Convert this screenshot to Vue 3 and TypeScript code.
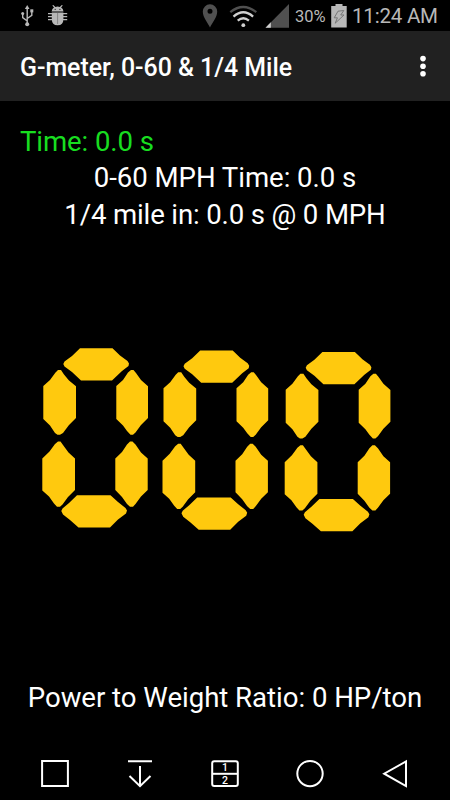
<script setup lang="ts">
interface Digit { id: number; x: number; y: number }

const digits: Digit[] = [
  { id: 1, x: 0, y: 0 },
  { id: 2, x: 120.2, y: 2.2 },
  { id: 3, x: 242.4, y: 3.7 },
]

// Six lit segments of a seven-segment zero
const segments: string[] = [
  'M50 13.3H82.5L90 20.5L97.5 26L99 28.5L98.5 31L92 36L82 45.5H51L42 37L34.5 31.5L33.3 29L34.5 26.5L42 21Z',
  'M28 35H31L34 39.5L39 45.5L46 51.3V83L39 90L33 98L30 99.7H27.5L25 98L20 90.5L13.3 84V51L20 45L25.5 37.5Z',
  'M101 35H103.5L106 38L111 45L118 51.3V83L111 90L105.5 97.5L103 99.7H100.5L97 96L93 90.5L86.3 84V51L93 45L98 37.5Z',
  'M28 106.5H30.5L33 110L38.5 117.5L45 123.5V155L38 162L32.5 169.5L30 171.8H27L24 168.5L19 161.5L12.3 155.5V123.5L19.5 116.5L25 109Z',
  'M100 106.5H102.5L105.5 109.5L111 117.5L117.7 123.5V155L111 161.5L105.5 169L103 171.8H100L97 169L92 162L85.3 155V123.5L92 117L97 109.5Z',
  'M47 160.2H80.5L88 167L95.5 173L97 175.5L96 178.5L88 184.5L80 192.6H48.5L40 185L33 179.5L31.3 176L32.5 173.5L39 168Z',
]
</script>

<template>
  <div class="screen">
    <header class="status">
      <svg class="notices" width="70" height="31" viewBox="0 0 70 31">
        <g fill="none" stroke="#b8b8b8" stroke-width="1.4">
          <path d="M27.2 8V24M27.2 21L22.7 17.6V13.5M27.2 18.5L31.8 15.3V11.5" />
        </g>
        <g fill="#b8b8b8">
          <path d="M27.2 5L29.5 9H24.9Z" />
          <circle cx="27.2" cy="24.2" r="2" />
          <circle cx="22.7" cy="13.5" r="1.5" />
          <path d="M30.3 9.3H33.3V12.4H30.3Z" />
          <path d="M51.6 11.6Q52 8.4 54 7.4L52.3 5.6L53.3 4.9L55.4 7Q57.5 6.2 59.8 7L61.8 4.9L62.8 5.6L61.1 7.4Q63.2 8.4 63.5 11.6Z" />
          <path d="M51.8 12.5H63.4V19Q63.4 25.3 57.6 25.3Q51.8 25.3 51.8 19Z" />
        </g>
        <path d="M48 13.7H52M48 16.7H52M48 19.6H52M63 13.7H67.2M63 16.7H67.2M63 19.6H67.2" stroke="#b8b8b8" stroke-width="1.3" />
        <path d="M57.6 13V24" stroke="#777" stroke-width=".8" />
        <path d="M54.6 9.4H55.8M59.3 9.4H60.5" stroke="#222" />
      </svg>
      <svg class="signals" width="92" height="31" viewBox="200 0 92 31">
        <path d="M210 27.5C208 23 202.8 17.5 202.8 11.5A7.2 7.2 0 0 1 217.2 11.5C217.2 17.5 212 23 210 27.5ZM210 8.8A2.5 2.5 0 1 0 210 13.8A2.5 2.5 0 1 0 210 8.8Z" fill="#505050" />
        <g fill="none" stroke-width="2.3">
          <path d="M230.3 12.2Q243.3 1.8 256.3 12.2" stroke="#505050" />
          <path d="M233.5 16.6Q243.3 8 253.1 16.6M237.7 20.6Q243.3 15.9 248.9 20.6" stroke="#d0d0d0" />
        </g>
        <circle cx="243.3" cy="25.2" r="1.9" fill="#d0d0d0" />
        <path d="M289 4V27.7H265.5Z" fill="#505050" />
        <path d="M270.8 22.3V27.7H265.5Z" fill="#d0d0d0" />
      </svg>
      <span class="percent">30%</span>
      <svg class="battery" width="16" height="24" viewBox="0 0 16 24">
        <path d="M4.5 0H11.5V2H15.7V23.5H.2V2H4.5Z" fill="#b8b8b8" />
        <path d="M7 7.2L12.8 6.5L9.7 11H13L4.2 19.2L6.4 13.8H3.2Z" fill="none" stroke="#777" />
      </svg>
      <span class="clock">11:24 AM</span>
    </header>

    <div class="toolbar">
      <h1>G-meter, 0-60 &amp; 1/4 Mile</h1>
      <svg width="10" height="26" viewBox="0 0 10 26" fill="#fff">
        <circle cx="5" cy="5.6" r="2.8" /><circle cx="5" cy="13.2" r="2.8" /><circle cx="5" cy="20.8" r="2.8" />
      </svg>
    </div>

    <main>
      <p class="timer">Time: 0.0 s</p>
      <p class="sprint">0-60 MPH Time: 0.0 s</p>
      <p class="quarter">1/4 mile in: 0.0 s @ 0 MPH</p>
      <svg class="speed" width="450" height="205" viewBox="0 0 450 205">
        <g fill="#ffc90e">
          <g v-for="digit in digits" :key="digit.id" :transform="`translate(${digit.x + 30} ${digit.y})`">
            <path v-for="segment in segments" :key="segment" :d="segment" />
          </g>
        </g>
      </svg>
      <p class="ratio">Power to Weight Ratio: 0 HP/ton</p>
    </main>

    <nav>
      <svg viewBox="0 0 30 30"><path d="M2.1 2.1H27.9V26.9H2.1Z" /></svg>
      <svg viewBox="0 0 30 30"><path d="M3 2.3H27M15 7V27M4.5 17L15 27.2L25.5 17" /></svg>
      <svg viewBox="0 0 30 30">
        <rect x="2.2" y="2.2" width="25.6" height="24.8" rx="2" /><path d="M2 14.8H28" />
        <text x="15" y="12.1">1</text><text x="15" y="24.8">2</text>
      </svg>
      <svg viewBox="0 0 30 30"><circle cx="15" cy="14.6" r="12.7" /></svg>
      <svg viewBox="0 0 30 30"><path d="M26 2.5V27L4.2 14.7Z" /></svg>
    </nav>
  </div>
</template>

<style>
body { margin: 0; background: #000; }
</style>

<style scoped>
.screen { width: 450px; height: 800px; display: flex; flex-direction: column; background: #000; color: #fff; font-family: Roboto, sans-serif; overflow: hidden; }
.status { height: 31px; flex: none; display: flex; align-items: flex-start; color: #b8b8b8; white-space: nowrap; }
.signals { margin-left: 130px; }
.percent { width: 36px; margin-left: 3px; line-height: 33px; font-size: 16.5px; }
.battery { margin-top: 3.5px; }
.clock { margin-left: 5px; line-height: 33px; font-size: 20.6px; letter-spacing: -.25px; }
.toolbar { height: 70px; flex: none; box-sizing: border-box; padding: 0 22.5px 0 20px; display: flex; align-items: center; justify-content: space-between; background: #212121; }
h1 { margin: 4px 0 0; font-size: 24.9px; line-height: 30px; font-weight: 500; white-space: nowrap; }
main { flex: 1; display: flex; flex-direction: column; padding-top: 22px; }
p { margin: 0; font-size: 27.6px; line-height: 37px; height: 36.7px; text-align: center; white-space: nowrap; }
.timer { height: 36px; padding-left: 20px; text-align: left; color: #18dd20; letter-spacing: -.1px; }
.sprint { height: 37.4px; letter-spacing: -.05px; }
.quarter { letter-spacing: -.15px; }
.speed { display: block; margin-top: 102px; }
.ratio { margin-top: 139px; letter-spacing: -.03px; }
nav { height: 56px; flex: none; box-sizing: border-box; padding: 0 40px 0; display: flex; justify-content: space-between; align-items: flex-start; }
nav svg { width: 30px; height: 30px; margin-top: 15px; fill: none; stroke: #fff; stroke-width: 2; }
nav text { fill: #fff; stroke: none; font: 500 10.5px Roboto, sans-serif; text-anchor: middle; }
</style>
